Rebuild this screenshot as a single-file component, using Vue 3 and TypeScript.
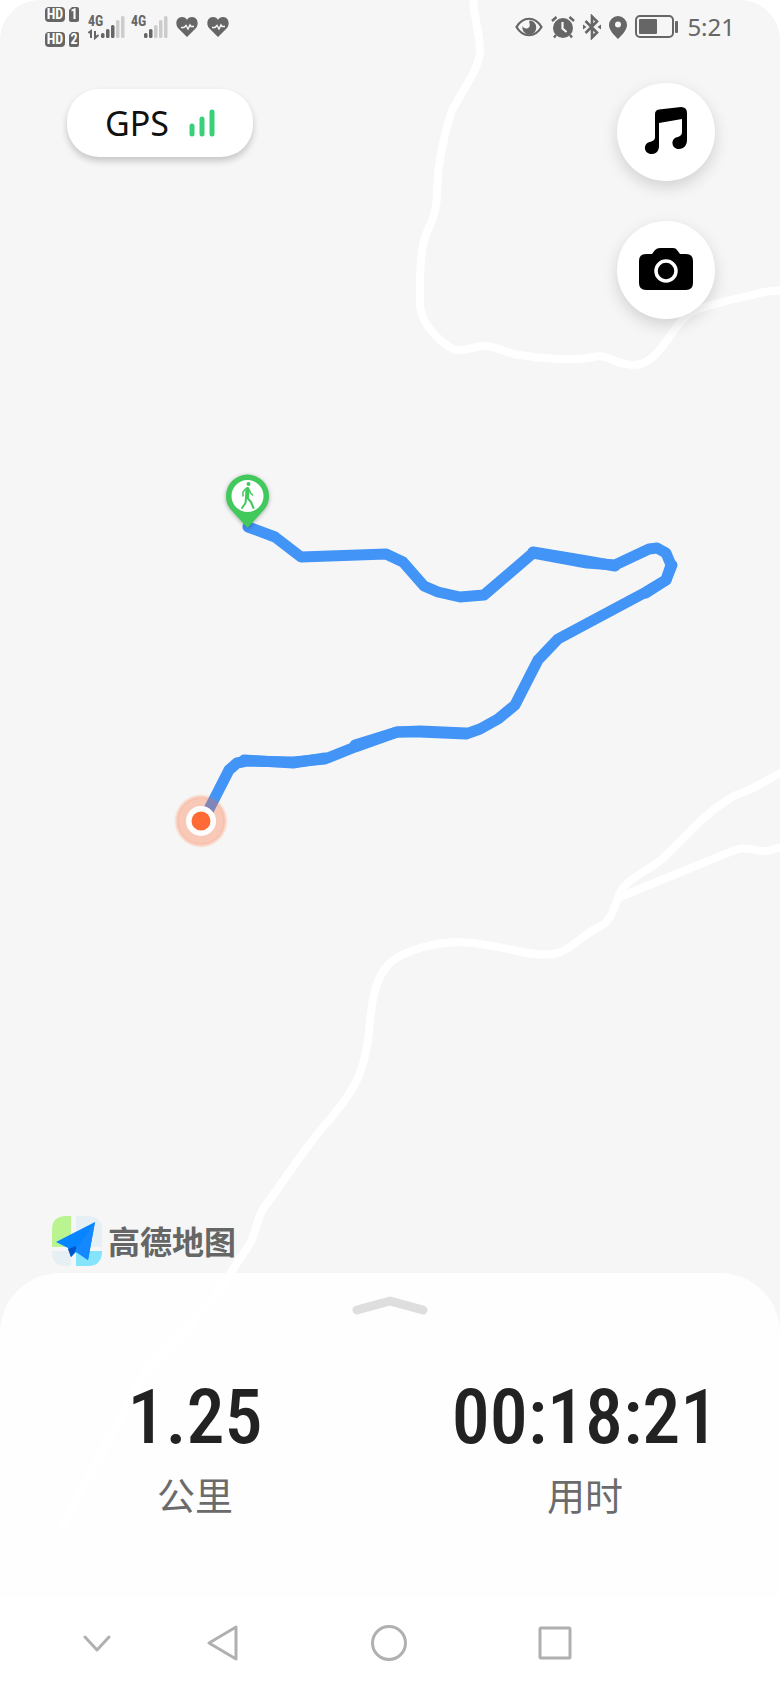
<script setup lang="ts">
interface Stat {
  value: string
  label: string
}

interface SignalBar {
  x: number
  height: number
  active: boolean
}

const stats: Stat[] = [
  { value: '1.25', label: '公里' },
  { value: '00:18:21', label: '用时' },
]

const barHeights = [5, 9, 13, 18, 22]

function signalBars(strength: number): SignalBar[] {
  return barHeights.map((height, i) => ({ x: 14 + i * 5, height, active: i < strength }))
}

const sims = [
  { id: 1, data: true, bars: signalBars(3) },
  { id: 2, data: false, bars: signalBars(2) },
]

const route: [number, number][] = [
  [248, 527], [275, 537], [301, 557], [386, 554], [403, 562], [424, 586], [438, 592],
  [460, 597], [484, 595], [533, 553], [587, 563], [615, 565], [649, 549], [657, 548],
  [666, 553], [671, 565], [666, 580], [646, 592], [558, 639], [538, 660], [515, 705],
  [498, 719], [480, 729], [466, 734], [420, 732], [397, 732], [355, 747], [325, 759],
  [293, 762], [247, 761], [237, 763], [229, 770], [203, 821],
]
// Stretches that were walked twice, a pixel or so beside the first pass.
const retraced: [number, number][][] = [
  [[355, 745], [397, 732], [420, 731], [466, 733]],
  [[244, 760], [293, 763], [325, 758]],
  [[533, 552], [587, 561], [615, 566]],
  [[646, 593], [666, 580], [672, 565]],
]
const toPoints = (line: [number, number][]): string => line.map((p) => p.join(',')).join(' ')
</script>

<template>
  <main class="screen">
    <svg class="map" viewBox="0 0 780 1600" aria-hidden="true">
      <defs>
        <radialGradient id="halo">
          <stop offset="0" stop-color="#ff6a35" stop-opacity=".32" />
          <stop offset=".8" stop-color="#ff6a35" stop-opacity=".32" />
          <stop offset=".85" stop-color="#ff6a35" stop-opacity=".4" />
          <stop offset="1" stop-color="#ff6a35" stop-opacity="0" />
        </radialGradient>
      </defs>
      <g class="roads">
        <path d="M473 -4 C474 20 480 34 480 50 C480 70 458 96 451 113 C445 132 438 160 437 190 C438 218 426 228 423 245 C419 268 420 290 420 305 C421 324 440 342 453 349 C464 353 476 345 487 346 C500 348 508 354 520 355 C540 358 570 361 588 358 C594 357 600 355 605 357 C616 361 622 365 635 365 C662 363 670 325 692 312 C712 302 744 298 763 292 L784 290" />
        <path d="M784 771 L755 787 C744 793 736 794 729 799 C700 817 686 837 662 859 C648 871 626 879 620 893 C614 906 612 920 602 925 C580 937 570 950 558 953 C546 956 532 954 522 952 C505 948 480 943 457 942 C433 943 407 950 392 961 C380 972 374 987 372 1006 C368 1030 370 1049 358 1078 C346 1103 330 1118 315 1137 C298 1159 280 1186 263 1209 C256 1221 256 1234 249 1245 L230 1274 C190 1338 150 1350 130 1400 L60 1530" />
        <path d="M784 847 C774 848 770 852 760 851 C742 846 738 849 725 854 L620 897" />
      </g>
      <polyline class="route" :points="toPoints(route)" />
      <polyline v-for="(line, i) in retraced" :key="i" class="route" :points="toPoints(line)" />
      <circle cx="201" cy="821" r="27" fill="url(#halo)" />
      <circle cx="201" cy="821" r="15" fill="#fff" />
      <circle cx="201" cy="821" r="9.500" fill="#ff6a35" />
      <g class="start-pin">
        <path d="M247.500 528 L233 512 C228 507 226 502 226 496 A21.500 21.500 0 0 1 269 496 C269 502 267 507 262 512 Z" fill="#41c95c" />
        <circle cx="247.500" cy="496" r="16" fill="#fff" />
        <g fill="none" stroke="#41c95c" stroke-linecap="round" stroke-linejoin="round">
          <circle cx="248.500" cy="484" r="2" fill="#41c95c" stroke="none" />
          <path d="M247.500 489 L247 497" stroke-width="4" />
          <path d="M245.500 489 L243 492 V496 M249.500 490 L250.500 493 L252.500 495" stroke-width="1.500" />
          <path d="M247.500 498 L251 502 L253.500 508 M246 498 L245.500 503 L242 508" stroke-width="2" />
        </g>
      </g>
    </svg>

    <header class="status-bar">
      <div class="status-group">
        <svg class="hd" viewBox="0 0 36 42" role="img" aria-label="HD 1, HD 2">
          <g v-for="sim in sims" :key="sim.id">
            <rect x="0" :y="sim.id === 1 ? 1 : 26" width="20" height="15" rx="4" fill="#666" />
            <path :d="sim.id === 1 ? 'M27 1h5q2 0 2 2v11q0 2-2 2h-6q-2 0-2-2v-10z' : 'M27 26h5q2 0 2 2v11q0 2-2 2h-6q-2 0-2-2v-10z'" fill="#666" />
            <text class="hd-text" x="10" :y="sim.id === 1 ? 13 : 38">HD</text>
            <text class="hd-text" x="29" :y="sim.id === 1 ? 13 : 38">{{ sim.id }}</text>
          </g>
        </svg>
        <svg v-for="sim in sims" :key="sim.id" class="sim" viewBox="0 0 43 30">
          <text class="net-text" x="0" y="14">4G</text>
          <path v-if="sim.data" d="M0.500 21 L3 19 V26 M7 19 V26 L10.500 23" fill="none" stroke="#666" stroke-width="2" />
          <rect
            v-for="bar in sim.bars" :key="bar.x" :x="bar.x - 1" :y="26 - bar.height"
            width="3.500" :height="bar.height" rx="1.500" :fill="bar.active ? '#666' : '#ccc'"
          />
        </svg>
        <div class="hearts">
          <svg v-for="n in 2" :key="n" width="22" height="20" viewBox="0 0 22 20">
            <path d="M11 20 L2 11 C-1 7.500 0 0 6 0 C8.500 0 10 1.200 11 2.800 C12 1.200 13.500 0 16 0 C22 0 23 7.500 20 11 Z" fill="#666" />
            <path d="M5 10.500 L8 10.500 L10 8.500 L12 12 L14 8 L15 9.500 H18" fill="none" stroke="#f6f6f6" stroke-width="1.500" />
          </svg>
        </div>
      </div>
      <div class="status-group right">
        <svg width="28" height="20" viewBox="0 0 28 20">
          <path d="M1.500 10 C8 -1 20 -1 26.500 10 C20 21 8 21 1.500 10 Z" fill="none" stroke="#666" stroke-width="2.200" />
          <path d="M14.500 3.500 A7 7 0 1 1 7.500 9 C8.500 12 13 12.500 14.500 9.500 C15.500 7 13.500 5 14.500 3.500 Z" fill="#666" />
        </svg>
        <svg width="24" height="24" viewBox="0 0 24 24">
          <circle cx="12" cy="13" r="10" fill="#666" />
          <path d="M1 6 L5.500 2 M23 6 L18.500 2 M5 20 L3 22.500 M19 20 L21 22.500" stroke="#666" stroke-width="2.400" />
          <path d="M11.500 7 V13.500 L15.500 17" fill="none" stroke="#f6f6f6" stroke-width="2.200" />
        </svg>
        <svg width="18" height="26" viewBox="0 0 18 26">
          <path d="M2.500 7 L14 18.500 L9 23.500 V2.500 L14 7.500 L2.500 19" fill="none" stroke="#666" stroke-width="2.600" />
          <path d="M0 10.500 L3.500 13 L0 15.500Z M18 10.500 L14.500 13 L18 15.500Z" fill="#666" />
        </svg>
        <svg width="18" height="23" viewBox="0 0 18 23">
          <path fill-rule="evenodd" d="M9 23 C5 19 0 14 0 9 A9 9 0 0 1 18 9 C18 14 13 19 9 23Z M9 5.500 A3 3 0 1 0 9 11.500 A3 3 0 1 0 9 5.500Z" fill="#666" />
        </svg>
        <svg width="44" height="24" viewBox="0 0 44 24">
          <rect x="1" y="1" width="37" height="21" rx="4" fill="none" stroke="#666" stroke-width="2" />
          <rect x="4" y="4" width="18" height="15" rx="1" fill="#666" />
          <rect x="40" y="6" width="3" height="12" rx="1" fill="#666" />
        </svg>
        <time class="clock">5:21</time>
      </div>
    </header>

    <section class="controls">
      <button class="gps" type="button">
        <span>GPS</span>
        <svg width="26" height="28" viewBox="0 0 26 28" aria-hidden="true">
          <path d="M3 17 V25 M13 10 V25 M23 3 V25" stroke="#38d078" stroke-width="5" stroke-linecap="round" />
        </svg>
      </button>
      <div class="tools">
        <button class="round" type="button" aria-label="音乐">
          <svg width="42" height="48" viewBox="0 0 42 48" aria-hidden="true">
            <path d="M10 6 Q10 2 14 1.500 L36 -1 Q42 -1 42 5 V32 C42 37 39 41 34 41 C26 41 25 30 33 29 C36 28 37 26 37 24 V11 L14 15 V38 C14 43 11 46 7 46 C-2 46 -2 35 5 34 C9 33 10 31 10 29 Z" fill="#000" />
          </svg>
        </button>
        <button class="round" type="button" aria-label="拍照">
          <svg width="54" height="44" viewBox="0 0 54 44" aria-hidden="true">
            <path d="M7 6 H13 L16 2 Q18 0 21 0 H34 Q37 0 38 2 L41 6 H47 Q54 6 54 13 V35 Q54 42 47 42 H7 Q0 42 0 35 V13 Q0 6 7 6 Z" fill="#000" />
            <circle cx="27" cy="23" r="10" fill="none" stroke="#fff" stroke-width="3.500" />
          </svg>
        </button>
      </div>
    </section>

    <div class="brand">
      <svg width="50" height="50" viewBox="0 0 50 50" aria-hidden="true">
        <path d="M0 31 V14 Q0 0 14 0 H19 V31Z" fill="#b9f491" />
        <path d="M24 0 H36 Q50 0 50 14 V31 H24Z" fill="#e6eff3" />
        <path d="M0 35 H19 V50 H14 Q0 50 0 36Z" fill="#e6eff3" />
        <path d="M24 35 H50 Q50 50 36 50 H24Z" fill="#83e4fc" />
        <path d="M43 6 L4 26 L16 32 L19 41 L24 36 L36 44 Z" fill="#0784ff" />
        <path d="M24 30 L16 33 L19 41 L24 35 Z" fill="#0055c8" />
        <path d="M43 6 L23 35 L36 44 Z" fill="#1688ff" />
      </svg>
      <span>高德地图</span>
    </div>

    <section class="panel">
      <button class="expand" type="button" aria-label="展开">
        <svg width="76" height="20" viewBox="0 0 76 20" aria-hidden="true">
          <path d="M5 14 L38 5 L71 14" fill="none" stroke="#dedede" stroke-width="9" stroke-linecap="round" stroke-linejoin="round" />
        </svg>
      </button>
      <dl class="stats">
        <div v-for="stat in stats" :key="stat.label" class="stat">
          <dd>{{ stat.value }}</dd>
          <dt>{{ stat.label }}</dt>
        </div>
      </dl>
    </section>

    <nav class="nav-bar">
      <button class="hide" type="button" aria-label="隐藏导航栏">
        <svg width="28" height="18" viewBox="0 0 28 18"><path d="M2 3 L14 16 L26 3" /></svg>
      </button>
      <button type="button" aria-label="返回">
        <svg width="32" height="38" viewBox="0 0 32 38"><path d="M29 3 V35 L2 19 Z" /></svg>
      </button>
      <button type="button" aria-label="主页">
        <svg width="38" height="38" viewBox="0 0 38 38"><circle cx="19" cy="19" r="16.500" /></svg>
      </button>
      <button type="button" aria-label="最近任务">
        <svg width="36" height="36" viewBox="0 0 36 36"><rect x="3" y="3" width="30" height="30" rx="1" /></svg>
      </button>
    </nav>
  </main>
</template>

<style>
body {
  margin: 0;
  background: #fff;
}
</style>

<style scoped>
.screen {
  position: relative;
  display: flex;
  flex-direction: column;
  min-height: 100vh;
  overflow: hidden;
  border-radius: 40px 40px 0 0;
  background: #f6f6f6;
  color: #222;
  font-family: "Noto Sans", "Noto Sans CJK SC", sans-serif;
}

button {
  display: flex;
  align-items: center;
  justify-content: center;
  margin: 0;
  padding: 0;
  border: 0;
  background: none;
  color: inherit;
  font: inherit;
}

svg {
  display: block;
  flex: none;
}

.map {
  position: absolute;
  top: 0;
  left: 0;
  width: 100%;
}

.roads {
  fill: none;
  stroke: #fff;
  stroke-width: 8;
  stroke-linejoin: round;
}

.route {
  fill: none;
  stroke: #4294f7;
  stroke-width: 11;
  stroke-linecap: round;
  stroke-linejoin: round;
}

.start-pin {
  filter: drop-shadow(0 1px 2px rgba(0, 0, 0, 0.3));
}

.status-bar,
.controls,
.brand,
.panel,
.nav-bar {
  position: relative;
}

.status-bar {
  display: flex;
  align-items: center;
  justify-content: space-between;
  height: 54px;
  padding: 0 45px;
}

.status-group {
  display: flex;
  align-items: center;
}

.right {
  gap: 8px;
}

.hd {
  width: 36px;
  height: 42px;
  margin-right: 7px;
}

.hd-text {
  fill: #fff;
  font: bold 14px "Roboto Condensed", Roboto, sans-serif;
  text-anchor: middle;
}

.sim {
  width: 43px;
  height: 30px;
}

.net-text {
  fill: #666;
  font: bold 14px "Roboto Condensed", Roboto, sans-serif;
}

.hearts {
  display: flex;
  gap: 9px;
  padding-left: 2px;
}

.clock {
  color: #666;
  font-size: 24px;
  line-height: 32px;
}

.controls {
  display: flex;
  align-items: flex-start;
  justify-content: space-between;
  padding: 29px 65px 0 67px;
}

.gps {
  gap: 20px;
  width: 186px;
  height: 68px;
  margin-top: 6px;
  border-radius: 32px;
  background: #fff;
  box-shadow: 0 4px 7px rgba(0, 0, 0, 0.2);
  color: #111;
  font-size: 34px;
}

.tools {
  display: grid;
  gap: 40px;
}

.round {
  width: 98px;
  height: 98px;
  border-radius: 50%;
  background: #fff;
  box-shadow: 0 6px 16px rgba(0, 0, 0, 0.15);
}

.round svg {
  overflow: visible;
}

.brand {
  display: flex;
  align-items: flex-start;
  gap: 6px;
  margin-top: auto;
  padding: 0 52px 7px;
  color: #666;
  font-family: "Noto Sans CJK SC", sans-serif;
  font-size: 32px;
  font-weight: 700;
  line-height: 48px;
}

.panel {
  height: 324px;
  border-radius: 60px 60px 0 0;
  background: rgba(255, 255, 255, 0.84);
}

.expand {
  width: 120px;
  height: 66px;
  margin: 0 auto;
}

.stats {
  display: grid;
  grid-template-columns: 1fr 1fr;
  margin: 0;
  padding-top: 32px;
}

.stat {
  display: flex;
  flex-direction: column;
  align-items: center;
}

.stat dd {
  margin: 0;
  font-family: "Roboto Condensed", Roboto, sans-serif;
  font-size: 76px;
  font-weight: 500;
  line-height: 92px;
}

.stat dt {
  color: #6b6b6b;
  font-family: "Noto Sans CJK SC", sans-serif;
  font-size: 38px;
  line-height: 62px;
}

.nav-bar {
  display: grid;
  grid-template-columns: 140fr 166fr 166fr 166fr 142fr;
  height: 92px;
  background: #fff;
}

.nav-bar svg {
  fill: none;
  stroke: #b0b0b0;
  stroke-width: 3;
  stroke-linecap: round;
  stroke-linejoin: round;
}

.hide {
  padding-left: 54px;
}
</style>
